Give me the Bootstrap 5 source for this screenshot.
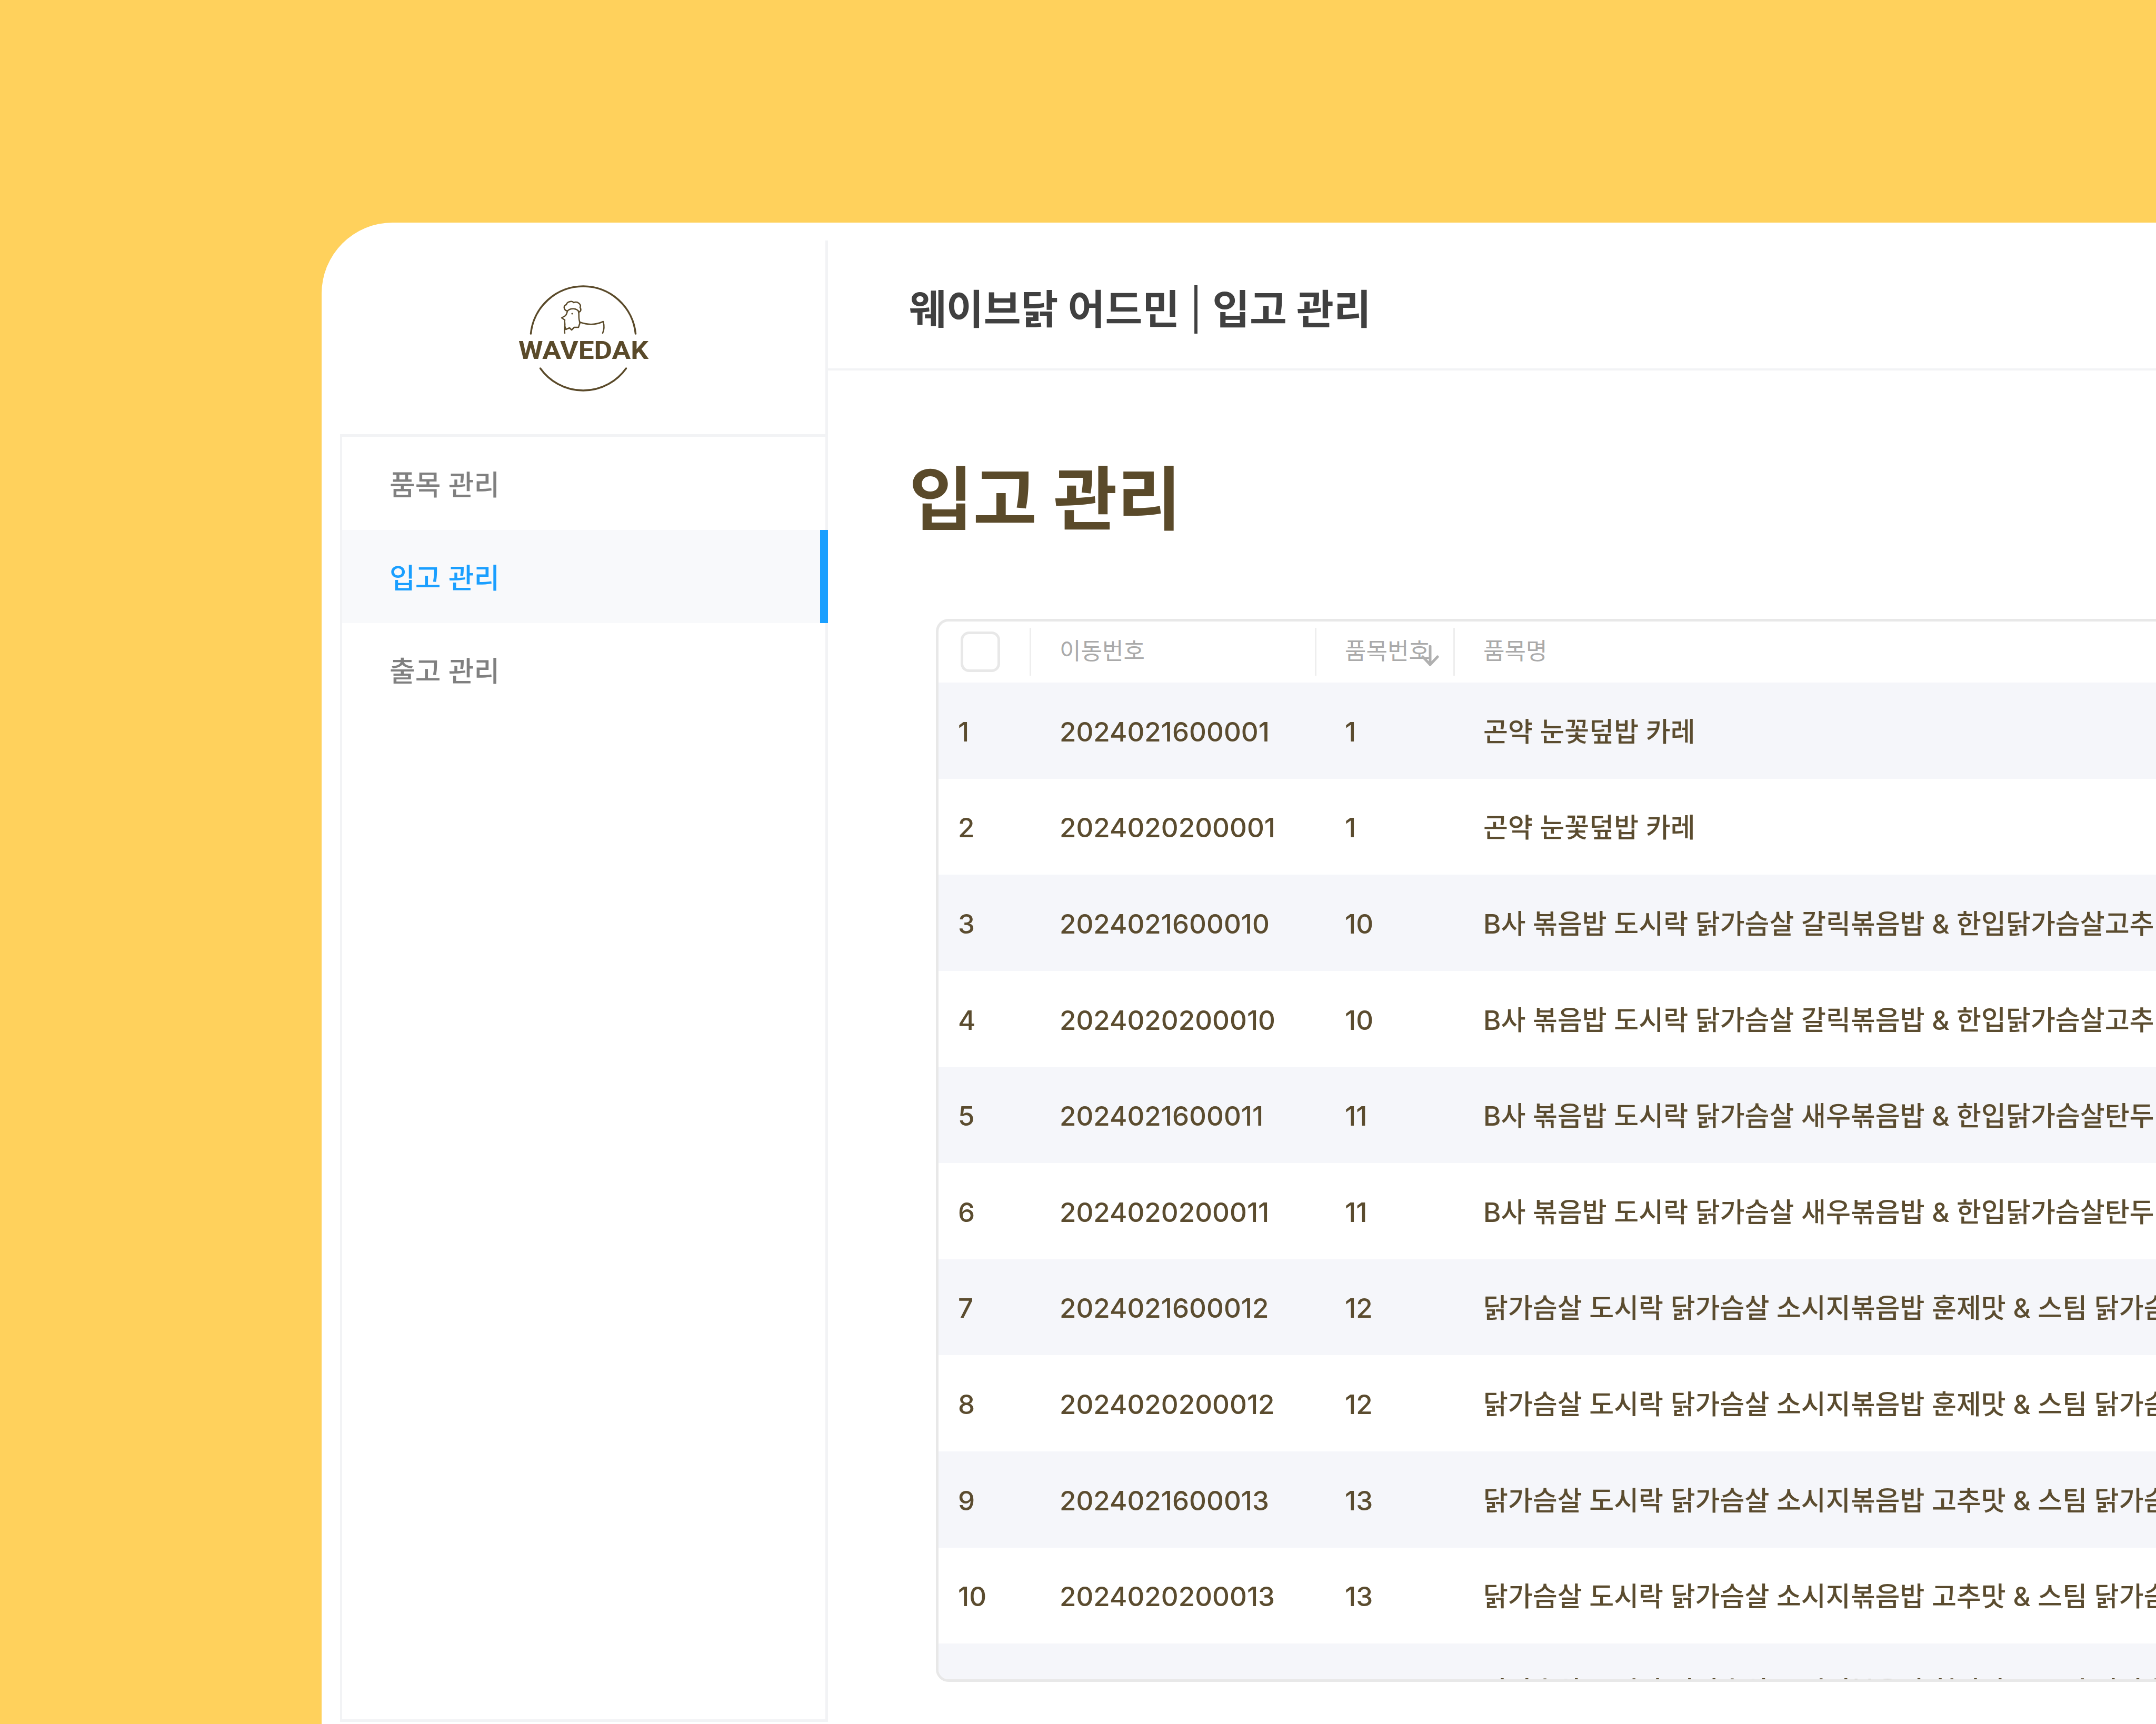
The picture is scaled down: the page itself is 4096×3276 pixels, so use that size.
<!DOCTYPE html>
<html lang="ko">
<head>
    <meta charset="UTF-8">
    <title>웨이브닭 어드민 | 입고 관리</title>
    <link rel="stylesheet" href="https://cdn.jsdelivr.net/npm/bootstrap@5.3.0/dist/css/bootstrap.min.css">
    <style>
        html, body { height: 100%; }
        body {
            background: #ffd15c;
            overflow: hidden;
            padding: 423px 0 0 611px;
            font-family: Inter, "Noto Sans CJK KR", sans-serif;
        }
        .app-window {
            height: 2853px;
            background: #fff;
            border-top-left-radius: 135px;
        }
        .side-col {
            flex: 0 0 927px;
            margin: 34px 0 0 35px;
            height: 2815px;
            border-right: 5px solid #f2f3f5;
        }
        .logo-box { height: 368px; padding: 3px 0 0 4px; }
        .logo-box svg { width: 260px; height: 215px; }
        .logo-text { font-family: Roboto, sans-serif; font-weight: 700; font-size: 49px; fill: #5a4a2a; }
        .side-nav {
            height: 2447px;
            border: solid #f2f3f5;
            border-width: 5px 0 5px 4px;
        }
        .side-nav .nav-link {
            height: 177px;
            padding: 8px 0 0 90px;
            font-size: 53px;
            font-weight: 500;
            color: #808080;
        }
        .side-nav .nav-link.active {
            color: #1a9fff;
            background: #f8f9fb;
            border-right: 15px solid #1a9fff;
            margin-right: -5px;
        }
        .main-col { min-width: 0; }
        .top-bar {
            height: 281px;
            padding: 108px 0 0 154px;
            border-bottom: 4px solid #f2f3f5;
            font-size: 77px;
            font-weight: 700;
            color: #404040;
        }
        .top-bar .title-sep { font-weight: 400; }
        .page-body { padding: 178px 0 0 154px; }
        .page-title {
            font-size: 132px;
            font-weight: 700;
            line-height: 1;
            color: #5a4a2a;
            margin: 0 0 162px;
        }
        .table-box {
            margin-left: 51px;
            width: 2600px;
            height: 2020px;
            overflow: hidden;
            border: 5px solid #e8e8e8;
            border-right: 0;
            border-radius: 24px 0 0 24px;
        }
        .stock-table {
            --bs-table-color: #5b4c2f;
            --bs-table-striped-color: #5b4c2f;
            --bs-table-striped-bg: #f5f6fa;
            table-layout: fixed;
            width: 2600px;
            margin: 0;
            font-size: 51px;
            font-weight: 500;
        }
        .stock-table > thead > tr > th {
            padding: 12px 0 13px;
            font-size: 44px;
            font-weight: 400;
            color: #aaa;
            height: 116px;
            vertical-align: top;
        }
        .head-cell {
            position: relative;
            height: 91px;
            padding: 0 0 3px 54px;
            border-left: 3px solid #eee;
        }
        .stock-table > tbody > tr > td {
            height: 183px;
            padding: 5px 0 0 57px;
            vertical-align: middle;
            white-space: nowrap;
        }
        .stock-table > tbody > tr > td:first-child { padding-left: 37px; }
        .stock-table > tbody > tr:nth-child(5n) > td,
        .stock-table > tbody > tr:nth-child(5n+2) > td { height: 182px; }
        /* only the tops of this row's letters show above the box edge */
        .stock-table > tbody > tr:last-child > td { padding-top: 0; }
        .col-check { width: 173px; }
        .col-move { width: 542px; }
        .col-item { width: 263px; }
        .check-all.form-check-input {
            display: block;
            width: 75px;
            height: 77px;
            margin: 7px 0 0 42px;
            border: 5px solid #e8e8e8;
            border-radius: 16px;
        }
        .sort-arrow {
            position: absolute;
            right: 27px;
            top: 33px;
            width: 34px;
            height: 40px;
        }
    </style>
</head>
<body>
    <div class="app-window d-flex">
        <aside class="side-col">
            <div class="logo-box d-flex align-items-center justify-content-center">
                <svg viewBox="980 535 260 215" fill="none" stroke="#5a4a2a" stroke-width="3.5" stroke-linecap="round" stroke-linejoin="round">
                    <path d="M1009.5 634A100 100 0 0 1 1208.5 634"/>
                    <path d="M1027.5 700A100 100 0 0 0 1190.5 700"/>
                    <path stroke-width="2.5" d="M1079 591C1071 589 1071 580 1077 579C1078 573 1088 571 1091 575C1098 572 1106 578 1103 584C1106 589 1104 592 1101 593C1097 585 1084 585 1079 591Z"/>
                    <path stroke-width="2.5" d="M1079 591C1078 596 1077 598 1075 600L1068 604L1074 608C1073 612 1075 616 1074 620L1076 626L1083 623L1087 627L1092 622L1100 622L1103 613C1099 606 1102 598 1100 592"/>
                    <path stroke-width="2.5" d="M1102 612C1118 618 1134 617 1147 611C1149 618 1149 626 1146 633"/>
                    <path stroke-width="2.5" d="M1074 620C1073 625 1073 629 1074 633"/>
                    <circle cx="1088" cy="596" r="1.6" fill="#5a4a2a" stroke="none"/>
                    <text class="logo-text" x="986" y="682" textLength="247" lengthAdjust="spacingAndGlyphs" stroke="none">WAVEDAK</text>
                </svg>
            </div>
            <nav class="side-nav nav flex-column">
                <a class="nav-link d-flex align-items-center" href="#">품목 관리</a>
                <a class="nav-link active d-flex align-items-center" href="#">입고 관리</a>
                <a class="nav-link d-flex align-items-center" href="#">출고 관리</a>
            </nav>
        </aside>
        <main class="main-col flex-grow-1">
            <header class="top-bar">웨이브닭 어드민 <span class="title-sep">|</span> 입고 관리</header>
            <section class="page-body">
                <h1 class="page-title">입고 관리</h1>
                <div class="table-box">
                    <table class="table table-striped table-borderless stock-table">
                        <colgroup>
                            <col class="col-check"><col class="col-move"><col class="col-item"><col>
                        </colgroup>
                        <thead>
                            <tr>
                                <th><input class="form-check-input check-all" type="checkbox" aria-label="전체 선택"></th>
                                <th><div class="head-cell d-flex align-items-center">이동번호</div></th>
                                <th>
                                    <div class="head-cell d-flex align-items-center">품목번호
                                        <svg class="sort-arrow" viewBox="0 0 34 40" fill="none" stroke="#b0b0b0" stroke-width="5" stroke-linecap="round" stroke-linejoin="round"><path d="M17 2V37M3 22L17 37L31 22"/></svg>
                                    </div>
                                </th>
                                <th><div class="head-cell d-flex align-items-center">품목명</div></th>
                            </tr>
                        </thead>
                        <tbody>
                            <tr><td>1</td><td>2024021600001</td><td>1</td><td>곤약 눈꽃덮밥 카레</td></tr>
                            <tr><td>2</td><td>2024020200001</td><td>1</td><td>곤약 눈꽃덮밥 카레</td></tr>
                            <tr><td>3</td><td>2024021600010</td><td>10</td><td>B사 볶음밥 도시락 닭가슴살 갈릭볶음밥 &amp; 한입닭가슴살고추맛</td></tr>
                            <tr><td>4</td><td>2024020200010</td><td>10</td><td>B사 볶음밥 도시락 닭가슴살 갈릭볶음밥 &amp; 한입닭가슴살고추맛</td></tr>
                            <tr><td>5</td><td>2024021600011</td><td>11</td><td>B사 볶음밥 도시락 닭가슴살 새우볶음밥 &amp; 한입닭가슴살탄두리맛</td></tr>
                            <tr><td>6</td><td>2024020200011</td><td>11</td><td>B사 볶음밥 도시락 닭가슴살 새우볶음밥 &amp; 한입닭가슴살탄두리맛</td></tr>
                            <tr><td>7</td><td>2024021600012</td><td>12</td><td>닭가슴살 도시락 닭가슴살 소시지볶음밥 훈제맛 &amp; 스팀 닭가슴살</td></tr>
                            <tr><td>8</td><td>2024020200012</td><td>12</td><td>닭가슴살 도시락 닭가슴살 소시지볶음밥 훈제맛 &amp; 스팀 닭가슴살</td></tr>
                            <tr><td>9</td><td>2024021600013</td><td>13</td><td>닭가슴살 도시락 닭가슴살 소시지볶음밥 고추맛 &amp; 스팀 닭가슴살</td></tr>
                            <tr><td>10</td><td>2024020200013</td><td>13</td><td>닭가슴살 도시락 닭가슴살 소시지볶음밥 고추맛 &amp; 스팀 닭가슴살</td></tr>
                            <tr><td>11</td><td>2024021600014</td><td>14</td><td>닭가슴살 도시락 닭가슴살 소시지볶음밥 청양맛 &amp; 스팀 닭가슴살</td></tr>
                        </tbody>
                    </table>
                </div>
            </section>
        </main>
    </div>
    <script src="https://cdn.jsdelivr.net/npm/bootstrap@5.3.0/dist/js/bootstrap.bundle.min.js"></script>
</body>
</html>
